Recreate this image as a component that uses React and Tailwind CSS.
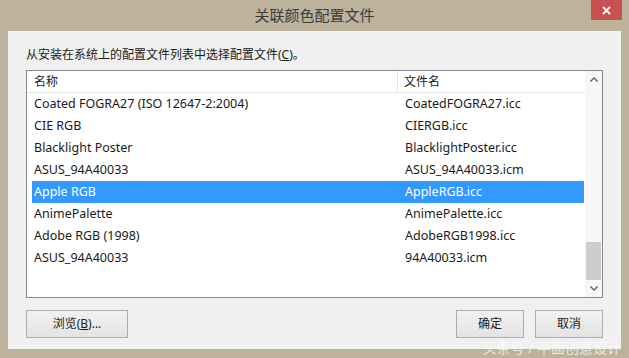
import React from 'react';

const rows = [
    { name: 'Coated FOGRA27 (ISO 12647-2:2004)', file: 'CoatedFOGRA27.icc' },
    { name: 'CIE RGB', file: 'CIERGB.icc' },
    { name: 'Blacklight Poster', file: 'BlacklightPoster.icc' },
    { name: 'ASUS_94A40033', file: 'ASUS_94A40033.icm' },
    { name: 'Apple RGB', file: 'AppleRGB.icc', selected: true },
    { name: 'AnimePalette', file: 'AnimePalette.icc' },
    { name: 'Adobe RGB (1998)', file: 'AdobeRGB1998.icc' },
    { name: 'ASUS_94A40033', file: '94A40033.icm' },
];

const font = "font-['Noto_Sans','Noto_Sans_CJK_SC',sans-serif]";

const Button = ({ className = '', children }) => (
    <button className={`h-[28px] border border-[#adadad] bg-gradient-to-b from-[#f2f2f2] to-[#e3e3e3] text-[12px] text-[#1a1a1a] ${className}`}>
        {children}
    </button>
);

const App = () => {
    return (
        <div className={`relative w-[629px] h-[358px] bg-[#bdb39c] flex flex-col ${font}`}>
            {/* title bar */}
            <div className="relative h-[31px] flex items-start justify-center">
                <span className="mt-[4px] text-[15px] leading-[22px] text-[#3a3a3a]">关联颜色配置文件</span>
                <div className="absolute right-[7px] top-0 w-[31px] h-[20px] bg-[#c75050] flex items-center justify-center">
                    <svg width="9" height="9" viewBox="0 0 9 9">
                        <path d="M1 1L8 8M8 1L1 8" stroke="#fff" strokeWidth="1.8" />
                    </svg>
                </div>
            </div>

            {/* client area */}
            <div className="mx-[8px] mb-[9px] flex-1 bg-[#f0f0f0] flex flex-col px-[18px] pt-[16px] pb-[11px]">
                <div className="text-[12px] leading-[16px] text-[#1a1a1a]">
                    从安装在系统上的配置文件列表中选择配置文件(<span className="underline">C</span>)。
                </div>

                <div className="mt-[7px] h-[228px] border border-[#828790] bg-white flex">
                    <div className="flex-1 flex flex-col">
                        <div className="h-[22px] flex border-b border-[#e5e5e5] text-[12px] text-[#1a1a1a]">
                            <div className="w-[371px] pl-[7px] border-r border-[#e5e5e5] flex items-center">名称</div>
                            <div className="pl-[6px] flex items-center">文件名</div>
                        </div>
                        {rows.map((r, i) => (
                            <div
                                key={i}
                                className={`ml-[5px] w-[552px] h-[22px] flex items-center text-[12.5px] ${r.selected ? 'bg-[#3399ff] text-white' : 'text-[#1a1a1a]'}`}
                            >
                                <span className="w-[371px] pl-[2px]">{r.name}</span>
                                <span className="pl-[2px]">{r.file}</span>
                            </div>
                        ))}
                    </div>

                    {/* scrollbar */}
                    <div className="w-[17px] bg-[#f7f7f7] flex flex-col">
                        <div className="h-[17px] flex items-center justify-center">
                            <svg width="8" height="5" viewBox="0 0 8 5">
                                <path d="M0.5 4.5L4 1L7.5 4.5" stroke="#606060" strokeWidth="1.4" fill="none" />
                            </svg>
                        </div>
                        <div className="flex-1 flex flex-col justify-end">
                            <div className="mx-[1px] h-[38px] bg-[#cdcdcd]" />
                        </div>
                        <div className="h-[17px] flex items-center justify-center">
                            <svg width="8" height="5" viewBox="0 0 8 5">
                                <path d="M0.5 0.5L4 4L7.5 0.5" stroke="#606060" strokeWidth="1.4" fill="none" />
                            </svg>
                        </div>
                    </div>
                </div>

                <div className="mt-[12px] flex">
                    <Button className="w-[102px]">
                        浏览(<span className="underline">B</span>)...
                    </Button>
                    <div className="flex-1" />
                    <Button className="w-[68px]">确定</Button>
                    <Button className="ml-[11px] w-[68px]">取消</Button>
                </div>
            </div>

            {/* watermark */}
            <div className="absolute right-[8px] bottom-[1px] text-[14px] leading-[18px] text-white/70">
                头条号 / 平面创意设计
            </div>
        </div>
    );
};

export default App;
